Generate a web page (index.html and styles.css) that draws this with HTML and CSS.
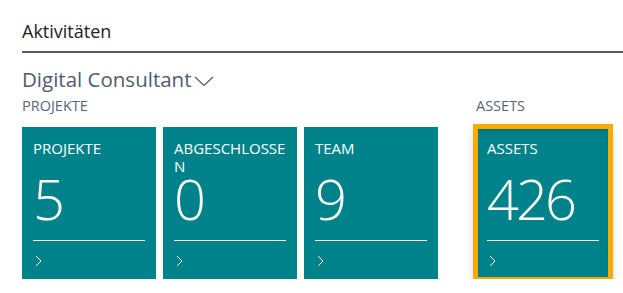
FILE: index.html
```html
<!DOCTYPE html>
<html lang="de">
<head>
    <meta charset="UTF-8">
    <meta name="viewport" content="width=device-width, initial-scale=1.0">
    <title>Aktivitäten</title>
    <link rel="stylesheet" href="styles.css">
</head>
<body>
    <div class="page">
        <header class="part-header">
            <h1>Aktivitäten</h1>
        </header>

        <section class="cue-section">
            <h2 class="cue-title">
                Digital Consultant
                <svg class="caret" width="20" height="10" viewBox="0 0 20 10">
                    <path d="M1 1 L10 9.5 L19 1" fill="none" stroke="#505c6d" stroke-width="1.2"/>
                </svg>
            </h2>

            <div class="cue-groups">
                <div class="cue-group">
                    <div class="group-label">PROJEKTE</div>
                    <div class="tiles">
                        <a class="tile" href="#">
                            <div class="tile-title">PROJEKTE</div>
                            <div class="tile-value">5</div>
                            <div class="tile-footer">
                                <svg width="7" height="12" viewBox="0 0 7 12"><path d="M1 1 L6 6 L1 11" fill="none" stroke="#fff" stroke-width="1"/></svg>
                            </div>
                        </a>
                        <a class="tile" href="#">
                            <div class="tile-title">ABGESCHLOSSEN</div>
                            <div class="tile-value">0</div>
                            <div class="tile-footer">
                                <svg width="7" height="12" viewBox="0 0 7 12"><path d="M1 1 L6 6 L1 11" fill="none" stroke="#fff" stroke-width="1"/></svg>
                            </div>
                        </a>
                        <a class="tile" href="#">
                            <div class="tile-title">TEAM</div>
                            <div class="tile-value">9</div>
                            <div class="tile-footer">
                                <svg width="7" height="12" viewBox="0 0 7 12"><path d="M1 1 L6 6 L1 11" fill="none" stroke="#fff" stroke-width="1"/></svg>
                            </div>
                        </a>
                    </div>
                </div>

                <div class="cue-group">
                    <div class="group-label">ASSETS</div>
                    <div class="tiles">
                        <a class="tile is-selected" href="#">
                            <div class="tile-title">ASSETS</div>
                            <div class="tile-value">426</div>
                            <div class="tile-footer">
                                <svg width="7" height="12" viewBox="0 0 7 12"><path d="M1 1 L6 6 L1 11" fill="none" stroke="#fff" stroke-width="1"/></svg>
                            </div>
                        </a>
                    </div>
                </div>
            </div>
        </section>
    </div>
</body>
</html>
```

FILE: styles.css
```css
body, h1, h2 {
    margin: 0;
    padding: 0;
}

body {
    font-family: 'Open Sans', 'Noto Sans', sans-serif;
    background-color: #fff;
    color: #212121;
}

.page {
    padding-left: 22px;
}

.part-header {
    padding-top: 20px;
    padding-bottom: 8px;
    border-bottom: 2px solid #505c6d;
}

.part-header h1 {
    font-size: 18px;
    font-weight: 400;
    line-height: 23px;
    color: #212121;
}

.cue-title {
    margin-top: 13px;
    font-size: 20.5px;
    font-weight: 400;
    line-height: 27px;
    color: #505c6d;
    display: flex;
    align-items: center;
    gap: 3px;
}

.caret {
    margin-top: 2px;
}

.cue-groups {
    display: flex;
    gap: 38px;
}

.group-label {
    margin-top: 4px;
    margin-bottom: 12px;
    font-size: 14.5px;
    line-height: 18px;
    color: #5a6577;
}

.tiles {
    display: flex;
    gap: 7px;
}

.tile {
    width: 134px;
    height: 152px;
    box-sizing: border-box;
    padding: 12px 11px 13px;
    background-color: #00828a;
    color: #fff;
    text-decoration: none;
    display: flex;
    flex-direction: column;
}

.tile-title {
    height: 36px;
    font-size: 15px;
    line-height: 18px;
    word-break: break-all;
}

.tile-value {
    margin-top: 1px;
    font-size: 56px;
    font-weight: 300;
    line-height: 44px;
    letter-spacing: -3px;
}

.tile-footer {
    margin-top: 20px;
    border-top: 1px solid #fff;
    padding-top: 14px;
    height: 11px;
}

.tile-footer svg {
    display: block;
    margin-left: 2px;
}

.is-selected {
    outline: 5px solid #f6ab07;
    outline-offset: -2px;
    box-shadow: 0 4px 9px rgba(0, 0, 0, 0.35), inset 0 3px 4px rgba(0, 0, 0, 0.25);
}
```
